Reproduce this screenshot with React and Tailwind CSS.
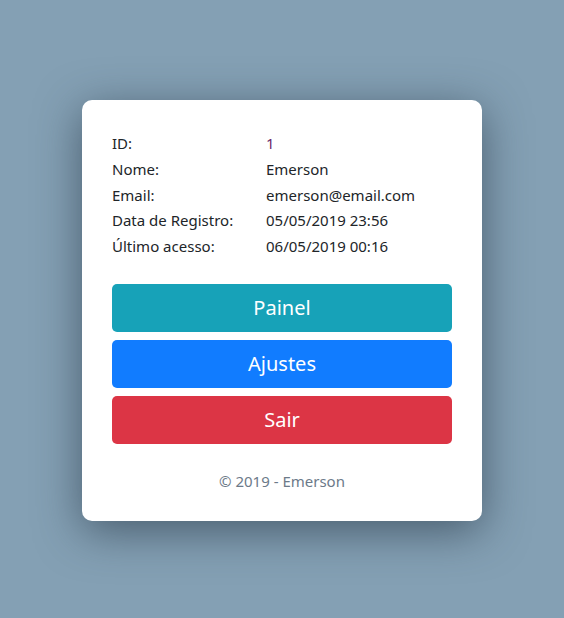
const rows = [
  ['ID:', '1'],
  ['Nome:', 'Emerson'],
  ['Email:', 'emerson@email.com'],
  ['Data de Registro:', '05/05/2019 23:56'],
  ['Último acesso:', '06/05/2019 00:16'],
]

export default function App() {
  return (
    <div
      className="min-h-[618px] bg-[#84a0b4] pt-[100px] flex justify-center"
      style={{ fontFamily: '"Segoe UI", "Noto Sans", sans-serif' }}
    >
      <div className="w-[400px] h-[421px] bg-white rounded-[10px] shadow-[0_10px_45px_rgba(40,55,70,0.65)] px-[30px] pt-[31px]">
        <div className="text-[15px] leading-[25.75px] text-[#212529]">
          {rows.map(([k, v]) => (
            <div key={k} className="flex">
              <div className="w-[154px]">{k}</div>
              <div className={k === 'ID:' ? 'text-[#6b2a6b]' : ''}>{v}</div>
            </div>
          ))}
        </div>
        <div className="mt-[24px] flex flex-col gap-[8px]">
          <Btn className="bg-[#17a2b8]">Painel</Btn>
          <Btn className="bg-[#117cff]">Ajustes</Btn>
          <Btn className="bg-[#dc3545]">Sair</Btn>
        </div>
        <div className="mt-[26px] text-center text-[15px] text-[#6c7a89]">© 2019 - Emerson</div>
      </div>
    </div>
  )
}

function Btn({ className, children }) {
  return (
    <button className={`h-[48px] w-full rounded-[5px] text-white text-[20px] ${className}`}>
      {children}
    </button>
  )
}
